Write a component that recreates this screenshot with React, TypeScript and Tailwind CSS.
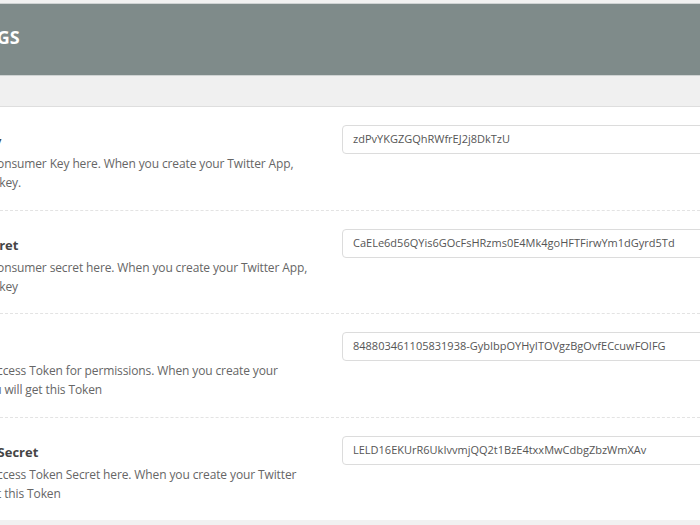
const fields = [
  {
    title: 'Consumer Key',
    lines: ['Enter Twitter Consumer Key here. When you create your Twitter App,', 'you will get this key.'],
    value: 'zdPvYKGZGQhRWfrEJ2j8DkTzU',
    h: 'h-[104px]',
  },
  {
    title: 'Consumer Secret',
    lines: ['Enter Twitter Consumer secret here. When you create your Twitter App,', 'you will get this key'],
    value: 'CaELe6d56QYis6GOcFsHRzms0E4Mk4goHFTFirwYm1dGyrd5Td',
    h: 'h-[103px]',
  },
  {
    title: 'Access Token',
    lines: ['Enter Twitter Access Token for permissions. When you create your', 'Twitter App, you will get this Token'],
    value: '848803461105831938-GybIbpOYHyITOVgzBgOvfECcuwFOIFG',
    h: 'h-[104px]',
  },
  {
    title: 'Access Token Secret',
    lines: ['Enter Twitter Access Token Secret here. When you create your Twitter', 'App, you will get this Token'],
    value: 'LELD16EKUrR6UkIvvmjQQ2t1BzE4txxMwCdbgZbzWmXAv',
    h: 'h-[102px]',
  },
];

export default function App() {
  return (
    <div className="w-[700px] h-[525px] overflow-hidden bg-[#f1f1f1] pt-[3px] font-['Open_Sans',sans-serif]">
      {/* header bar */}
      <div className="h-[73px] bg-[#7f8b8a] border-t border-b border-[#cfd3d3] flex items-center pb-[5px]">
        <h1 className="-ml-[66px] text-[18px] font-bold text-white tracking-[0.2px]">SETTINGS</h1>
      </div>

      {/* sub bar */}
      <div className="h-[31px] bg-[#f0f0f0] border-b border-[#dedede]" />

      {/* rows */}
      <div className="bg-white">
        {fields.map((f, i) => (
          <div
            key={f.title}
            className={`${f.h} flex ${i < fields.length - 1 ? 'border-b border-dashed border-[#e3e3e3]' : ''}`}
          >
            <div className="w-[342px] shrink-0 overflow-hidden">
              <div className="pt-[24px] w-[420px]">
                <div className="-ml-[92px] text-[13px] font-bold text-[#454545] leading-[20px]">{f.title}</div>
                <div className="-ml-[84px] mt-[3px] text-[12px] text-[#666] leading-[19px] whitespace-nowrap tracking-[-0.12px]">
                  <div>{f.lines[0]}</div>
                  <div className="-ml-[4px]">{f.lines[1]}</div>
                </div>
              </div>
            </div>
            <div className="pt-[18px] flex-1">
              <div className="w-[420px] h-[29px] border border-[#dcdcdc] rounded-[4px] flex items-center pl-[10px] text-[11px] text-[#555] bg-white">
                {f.value}
              </div>
            </div>
          </div>
        ))}
      </div>
    </div>
  );
}
